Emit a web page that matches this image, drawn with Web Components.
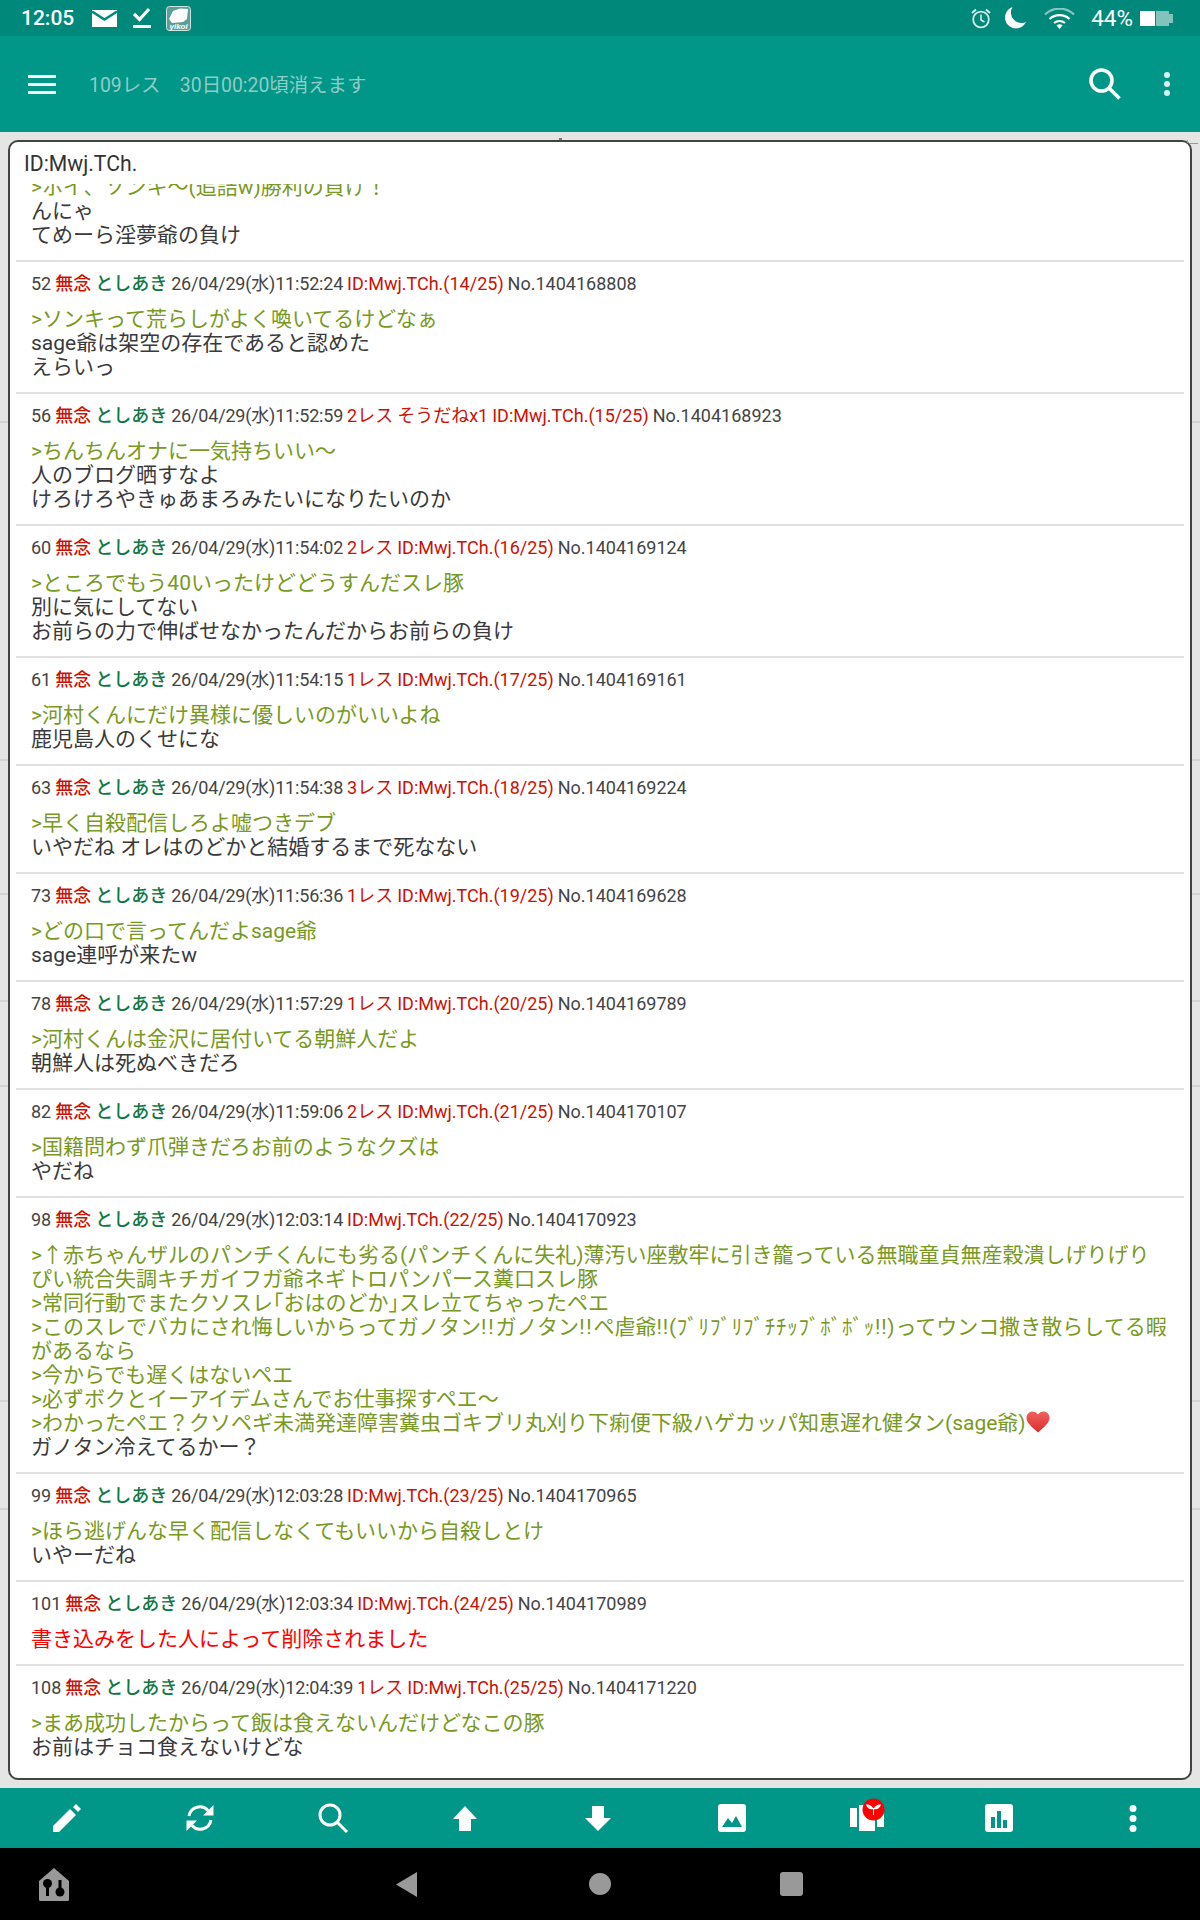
<!DOCTYPE html>
<html lang="ja">
<head>
<meta charset="utf-8">
<title>109レス</title>
<style>
html,body{margin:0;padding:0;background:#000}
body{font-family:Roboto,"Noto Sans CJK JP",sans-serif}
</style>
</head>
<body>
<app-root>
  <status-bar slot="status"></status-bar>
  <app-bar slot="bar"></app-bar>
  <res-popup slot="main" label="ID:Mwj.TCh.">
    <res-row clip>
      <r-line q>&gt;ホイ、ソンキ〜(追詰w)勝利の負け！</r-line>
      <r-line>んにゃ</r-line>
      <r-line>てめーら淫夢爺の負け</r-line>
    </res-row>
    <res-row no="52" date="26/04/29(水)11:52:24" rid="ID:Mwj.TCh.(14/25)" num="No.1404168808">
      <r-line q>&gt;ソンキって荒らしがよく喚いてるけどなぁ</r-line>
      <r-line>sage爺は架空の存在であると認めた</r-line>
      <r-line>えらいっ</r-line>
    </res-row>
    <res-row no="56" date="26/04/29(水)11:52:59" res="2レス そうだねx1" rid="ID:Mwj.TCh.(15/25)" num="No.1404168923">
      <r-line q>&gt;ちんちんオナに一気持ちいい〜</r-line>
      <r-line>人のブログ晒すなよ</r-line>
      <r-line>けろけろやきゅあまろみたいになりたいのか</r-line>
    </res-row>
    <res-row no="60" date="26/04/29(水)11:54:02" res="2レス" rid="ID:Mwj.TCh.(16/25)" num="No.1404169124">
      <r-line q>&gt;ところでもう40いったけどどうすんだスレ豚</r-line>
      <r-line>別に気にしてない</r-line>
      <r-line>お前らの力で伸ばせなかったんだからお前らの負け</r-line>
    </res-row>
    <res-row no="61" date="26/04/29(水)11:54:15" res="1レス" rid="ID:Mwj.TCh.(17/25)" num="No.1404169161">
      <r-line q>&gt;河村くんにだけ異様に優しいのがいいよね</r-line>
      <r-line>鹿児島人のくせにな</r-line>
    </res-row>
    <res-row no="63" date="26/04/29(水)11:54:38" res="3レス" rid="ID:Mwj.TCh.(18/25)" num="No.1404169224">
      <r-line q>&gt;早く自殺配信しろよ嘘つきデブ</r-line>
      <r-line>いやだね オレはのどかと結婚するまで死なない</r-line>
    </res-row>
    <res-row no="73" date="26/04/29(水)11:56:36" res="1レス" rid="ID:Mwj.TCh.(19/25)" num="No.1404169628">
      <r-line q>&gt;どの口で言ってんだよsage爺</r-line>
      <r-line>sage連呼が来たw</r-line>
    </res-row>
    <res-row no="78" date="26/04/29(水)11:57:29" res="1レス" rid="ID:Mwj.TCh.(20/25)" num="No.1404169789">
      <r-line q>&gt;河村くんは金沢に居付いてる朝鮮人だよ</r-line>
      <r-line>朝鮮人は死ぬべきだろ</r-line>
    </res-row>
    <res-row no="82" date="26/04/29(水)11:59:06" res="2レス" rid="ID:Mwj.TCh.(21/25)" num="No.1404170107">
      <r-line q>&gt;国籍問わず爪弾きだろお前のようなクズは</r-line>
      <r-line>やだね</r-line>
    </res-row>
    <res-row no="98" date="26/04/29(水)12:03:14" rid="ID:Mwj.TCh.(22/25)" num="No.1404170923">
      <r-line q>&gt;↑赤ちゃんザルのパンチくんにも劣る(パンチくんに失礼)薄汚い座敷牢に引き籠っている無職童貞無産穀潰しげりげり</r-line>
      <r-line q>ぴい統合失調キチガイフガ爺ネギトロパンパース糞口スレ豚</r-line>
      <r-line q>&gt;常同行動でまたクソスレ｢おはのどか｣スレ立てちゃったペエ</r-line>
      <r-line q>&gt;このスレでバカにされ悔しいからってガノタン<span style="letter-spacing:1.8px">!!</span>ガノタン<span style="letter-spacing:1.8px">!!</span>ペ虐爺<span style="letter-spacing:.76px">!!(ﾌﾞﾘﾌﾞﾘﾌﾞﾁﾁｯﾌﾞﾎﾞﾎﾞｯ!!)</span>ってウンコ撒き散らしてる暇</r-line>
      <r-line q>があるなら</r-line>
      <r-line q>&gt;今からでも遅くはないペエ</r-line>
      <r-line q>&gt;必ずボクとイーアイデムさんでお仕事探すペエ〜</r-line>
      <r-line q>&gt;わかったペエ？クソペギ未満発達障害糞虫ゴキブリ丸刈り下痢便下級ハゲカッパ知恵遅れ健タン(sage爺)<heart-mark></heart-mark></r-line>
      <r-line>ガノタン冷えてるかー？</r-line>
    </res-row>
    <res-row no="99" date="26/04/29(水)12:03:28" rid="ID:Mwj.TCh.(23/25)" num="No.1404170965">
      <r-line q>&gt;ほら逃げんな早く配信しなくてもいいから自殺しとけ</r-line>
      <r-line>いやーだね</r-line>
    </res-row>
    <res-row no="101" date="26/04/29(水)12:03:34" rid="ID:Mwj.TCh.(24/25)" num="No.1404170989">
      <r-line del>書き込みをした人によって削除されました</r-line>
    </res-row>
    <res-row no="108" date="26/04/29(水)12:04:39" res="1レス" rid="ID:Mwj.TCh.(25/25)" num="No.1404171220">
      <r-line q>&gt;まあ成功したからって飯は食えないんだけどなこの豚</r-line>
      <r-line>お前はチョコ食えないけどな</r-line>
    </res-row>
  </res-popup>
  <bottom-tools slot="tools"></bottom-tools>
  <nav-keys slot="nav"></nav-keys>
</app-root>

<script>
function def(name, css, html){
  customElements.define(name, class extends HTMLElement{
    constructor(){
      super();
      this.attachShadow({mode:'open'});
    }
    connectedCallback(){
      if(!this.shadowRoot.firstChild)
        this.shadowRoot.innerHTML='<style>'+css+'</style>'+(typeof html==='function'?html(this):html);
    }
  });
}

def('app-root',
 `:host{display:flex;flex-direction:column;width:1200px;height:1920px;overflow:hidden;
   font-family:Roboto,"Noto Sans CJK JP",sans-serif}
  ::slotted([slot=main]){flex:1;min-height:0}`,
 `<slot name="status"></slot><slot name="bar"></slot><main-area><slot name="main"></slot></main-area><slot name="tools"></slot><slot name="nav"></slot>`);

def('main-area',
 `:host{flex:1;min-height:0;display:flex;padding:8px;position:relative;background-color:#e5e5e5;
   background-image:
    linear-gradient(#d2d2d2,#d2d2d2),linear-gradient(#d2d2d2,#d2d2d2),linear-gradient(#d2d2d2,#d2d2d2),
    linear-gradient(#d2d2d2,#d2d2d2),linear-gradient(#d2d2d2,#d2d2d2),linear-gradient(#d2d2d2,#d2d2d2),linear-gradient(#d2d2d2,#d2d2d2);
   background-repeat:no-repeat;background-size:100% 2px;
   background-position:0 289px,0 627px,0 761px,0 868px,0 953px,0 1268px,0 1376px}
  ::slotted(*){flex:1;min-width:0}
  .tick{position:absolute;left:559px;top:6px;width:3px;height:2px;background:#777}
  .edge{position:absolute;left:1190px;top:11px;width:8px;height:1px;background:#999}
  .edge2{position:absolute;left:1187px;top:8px;width:1px;height:3px;background:#999}`,
 `<span class="tick"></span><span class="edge"></span><span class="edge2"></span><slot></slot>`);

def('status-bar',
 `:host{display:flex;align-items:center;height:36px;background:#00897b;color:#fff;flex:none;padding:0 27px 0 21px;box-sizing:border-box;gap:0}
  .t{font-size:21px;font-weight:500;width:71px}
  svg{display:block;flex:none}
  .sp{flex:1}
  .pct{font-size:22.5px;font-weight:400;margin:0 7px 0 16px}`,
 `<span class="t">12:05</span>
  <svg width="25" height="17" viewBox="0 0 25 17"><rect width="25" height="17" fill="#fff"/><path d="M0 1.5 12.5 9.5 25 1.5" fill="none" stroke="#00897b" stroke-width="2.4"/></svg>
  <svg style="margin-left:16px" width="18" height="23" viewBox="0 0 18 23"><path d="M1 7 6.5 12.5 16 2" fill="none" stroke="#fff" stroke-width="3.2"/><rect y="18" width="18" height="3" fill="#fff"/></svg>
  <svg style="margin-left:15px" width="25" height="25" viewBox="0 0 25 25"><rect x=".5" y=".5" width="24" height="24" rx="3" fill="#5d9f98" stroke="#cfe5e2"/><path d="M3 13 7 5 14 2.5 22 3 21 13 17 16 6 17Z" fill="#fff"/><text x="3.5" y="23" font-family="Liberation Sans" font-size="8" font-weight="700" font-style="italic" fill="#fff">yikoi</text></svg>
  <span class="sp"></span>
  <svg width="20" height="21" viewBox="0 0 20 21" fill="none" stroke="#d6ece9"><circle cx="10" cy="11.5" r="7.8" stroke-width="1.8"/><path d="M10 6.5V12L13.5 14" stroke-width="1.6"/><path d="M1 5 5 1.5M19 5 15 1.5" stroke-width="2"/></svg>
  <svg style="margin-left:13px" width="22" height="22" viewBox="0 0 22 22"><path d="M8.5 0A11 11 0 1 0 22 15 10.5 10.5 0 0 1 8.5 0Z" fill="#fff"/></svg>
  <svg style="margin-left:18px" width="31" height="21" viewBox="0 0 31 21" fill="none" stroke="#fff" stroke-width="2.2"><path d="M1 6.5A21 21 0 0 1 30 6.5" stroke="#8cc5bf"/><path d="M5.5 11A15 15 0 0 1 25.5 11"/><path d="M10 15A9 9 0 0 1 21 15"/><path d="M12.5 17.5 15.5 21 18.5 17.5A4 4 0 0 0 12.5 17.5Z" fill="#fff" stroke="none"/></svg>
  <span class="pct">44%</span>
  <svg width="33" height="15" viewBox="0 0 33 15"><rect width="15" height="15" fill="#fff"/><path d="M16 0H29V3H33V12H29V15H16Z" fill="#80c4bd"/></svg>`);

def('app-bar',
 `:host{display:flex;align-items:center;height:96px;background:#009688;flex:none;box-sizing:border-box;position:relative}
  .m{margin-left:28px;width:28px;height:19px;display:flex;flex-direction:column;justify-content:space-between;flex:none}
  .m i{display:block;height:3px;background:#fff;opacity:.95}
  .t{margin-left:33px;padding-bottom:2px;font-size:19.4px;color:#8fcdc6;flex:1;white-space:pre}
  svg{display:block;flex:none}`,
 `<span class="m"><i></i><i></i><i></i></span>
  <span class="t">109レス　30日00:20頃消えます</span>
  <svg width="32" height="32" viewBox="0 0 32 32" fill="none" stroke="#fff"><circle cx="12.5" cy="12.5" r="10.5" stroke-width="3.6"/><path d="M20 20 30.5 30.5" stroke-width="3.6"/></svg>
  <svg style="margin:0 29px 0 42px" width="8" height="26" viewBox="0 0 8 26" fill="#d9f0ed"><circle cx="4" cy="4" r="3"/><circle cx="4" cy="13" r="3"/><circle cx="4" cy="22" r="3"/></svg>`);

def('res-popup',
 `:host{display:flex;flex-direction:column;box-sizing:border-box;border:2px solid #444;border-radius:10px;background:#fff;overflow:hidden}
  .h{flex:none;height:42px;display:flex;align-items:center;padding-left:14px;font-size:21.2px;color:#333}
  .l{flex:1;min-height:0;overflow:hidden;display:flex;flex-direction:column;justify-content:flex-end;padding:0 6px 6px}
  ::slotted(*){flex:none}`,
 h=>`<div class="h">${h.getAttribute('label')}</div><div class="l"><slot></slot></div>`);

def('res-row',
 `:host{display:block;box-sizing:border-box;border-top:2px solid #e0e0e0;padding:10px 0 13px 15px;color:#333}
  .h{height:24px;line-height:24px;font-size:18px;color:#444;white-space:nowrap;margin-bottom:11px;word-spacing:-.5px}
  .n{color:#cc1105;font-weight:500}.a{color:#117743;font-weight:500}.r{color:#cc1105}
  .d{letter-spacing:-.18px}`,
 h=>{
  const g=k=>h.getAttribute(k);
  const head=g('no')?`<div class="h">${g('no')} <span class="n">無念</span> <span class="a">としあき</span> <span class="d">${g('date')}</span> ${g('res')?`<span class="r">${g('res')}</span> `:''}<span class="r">${g('rid')}</span> ${g('num')}</div>`:'<div class="h"></div>';
  return head+'<slot></slot>';
 });

def('r-line',
 `:host{display:block;font-size:21px;line-height:24px;height:24px;color:#3a3a3a;white-space:nowrap}
  :host([q]){color:#789922}
  :host([del]){color:#f00}`,
 `<slot></slot>`);

def('heart-mark',
 `:host{display:inline-block;vertical-align:-3px;width:24px;height:22px}svg{display:block}`,
 `<svg width="24" height="22" viewBox="0 0 24 22"><defs><linearGradient id="g" x1="0" y1="0" x2="0" y2="1"><stop offset="0" stop-color="#f0635f"/><stop offset="1" stop-color="#d92b2b"/></linearGradient></defs><path d="M12 21.5C5 15.5 .5 11.5.5 6.8.5 3 3.4.5 6.6.5 8.8.5 10.8 1.6 12 3.6 13.2 1.6 15.2.5 17.4.5 20.6.5 23.5 3 23.5 6.8 23.5 11.5 19 15.5 12 21.5Z" fill="url(#g)"/></svg>`);

def('bottom-tools',
 `:host{display:flex;height:60px;background:#009688;flex:none;box-shadow:0 -4px 0 #dcdcdc}
  .c{flex:1;display:flex;align-items:center;justify-content:center;position:relative}
  svg{display:block;overflow:visible}`,
 `<span class="c"><svg width="28" height="28" viewBox="0 0 28 28" fill="#fff"><path d="M0 28V22L17 5 23 11 6 28Z"/><path d="M20 3 23 0 28 5 25 8Z"/></svg></span>
  <span class="c"><svg width="28" height="28" viewBox="0 0 28 28" fill="none" stroke="#fff" stroke-width="3"><path d="M3 12A11 11 0 0 1 22 6.5"/><path d="M25 16A11 11 0 0 1 6 21.5"/><path d="M27.5 1V11.5H17Z" fill="#fff" stroke="none"/><path d="M.5 27V16.5H11Z" fill="#fff" stroke="none"/></svg></span>
  <span class="c"><svg width="30" height="30" viewBox="0 0 30 30" fill="none" stroke="#fff" stroke-width="3"><circle cx="12" cy="12" r="10"/><path d="M19 19 29 29"/></svg></span>
  <span class="c"><svg style="margin-right:3px" width="24" height="25" viewBox="0 0 24 25" fill="#fff"><path d="M12 0 24 13H18V25H6V13H0Z"/></svg></span>
  <span class="c"><svg style="margin-right:3px" width="26" height="25" viewBox="0 0 26 25" fill="#fff"><path d="M13 25 0 12H7V0H19V12H26Z"/></svg></span>
  <span class="c"><svg style="margin-right:3px" width="28" height="28" viewBox="0 0 28 28"><rect width="28" height="28" rx="3" fill="#fff"/><path d="M4 23 10 14 14 19 18 12 24 23Z" fill="#009688"/></svg></span>
  <span class="c"><svg width="34" height="27" viewBox="0 0 34 27" fill="#fff"><rect x="0" y="3" width="7" height="19"/><rect x="9" y="0" width="16" height="26"/><rect x="27" y="3" width="7" height="19"/></svg>
    <svg style="position:absolute;left:62.500px;top:9.500px" width="23" height="23" viewBox="0 0 23 23"><circle cx="11.5" cy="11.5" r="11" fill="#f00"/><path d="M11.5 11C9 6 5 6.5 4 6.5 5 10.5 8 12 11.5 11ZM11.5 11C14 6 18 6.5 19 6.5 18 10.5 15 12 11.5 11Z" fill="#fff"/><path d="M11.5 10V17" stroke="#fff" stroke-width="1"/></svg></span>
  <span class="c"><svg style="margin-right:2px" width="28" height="28" viewBox="0 0 28 28"><rect width="28" height="28" rx="3" fill="#fff"/><rect x="6" y="13" width="4" height="11" fill="#009688"/><rect x="12" y="7" width="4" height="17" fill="#009688"/><rect x="18" y="16" width="4" height="8" fill="#009688"/></svg></span>
  <span class="c"><svg width="8" height="27" viewBox="0 0 8 27" fill="#fff"><circle cx="4" cy="3.5" r="3.5"/><circle cx="4" cy="13.5" r="3.5"/><circle cx="4" cy="23.5" r="3.5"/></svg></span>`);

def('nav-keys',
 `:host{display:flex;height:72px;background:#000;flex:none;align-items:center;position:relative}
  svg{display:block;flex:none}`,
 `<svg style="margin-left:39px" width="30" height="33" viewBox="0 0 30 33"><path d="M15 0 30 13V31.5Q30 33 28.500 33H1.500Q0 33 0 31.500V13Z" fill="#999"/><circle cx="8.500" cy="15.500" r="4.500"/><rect x="7" y="15" width="3" height="13"/><circle cx="21" cy="24" r="4.500"/><rect x="19.500" y="12" width="3" height="13"/></svg>
  <svg style="margin-left:327px" width="21" height="25" viewBox="0 0 21 25"><path d="M21 0V25L0 12.500Z" fill="#999"/></svg>
  <svg style="margin-left:172px" width="22" height="22" viewBox="0 0 22 22"><circle cx="11" cy="11" r="11" fill="#999"/></svg>
  <svg style="margin-left:169px" width="23" height="24" viewBox="0 0 23 24"><rect width="23" height="24" rx="3" fill="#999"/></svg>`);
</script>
</body>
</html>
